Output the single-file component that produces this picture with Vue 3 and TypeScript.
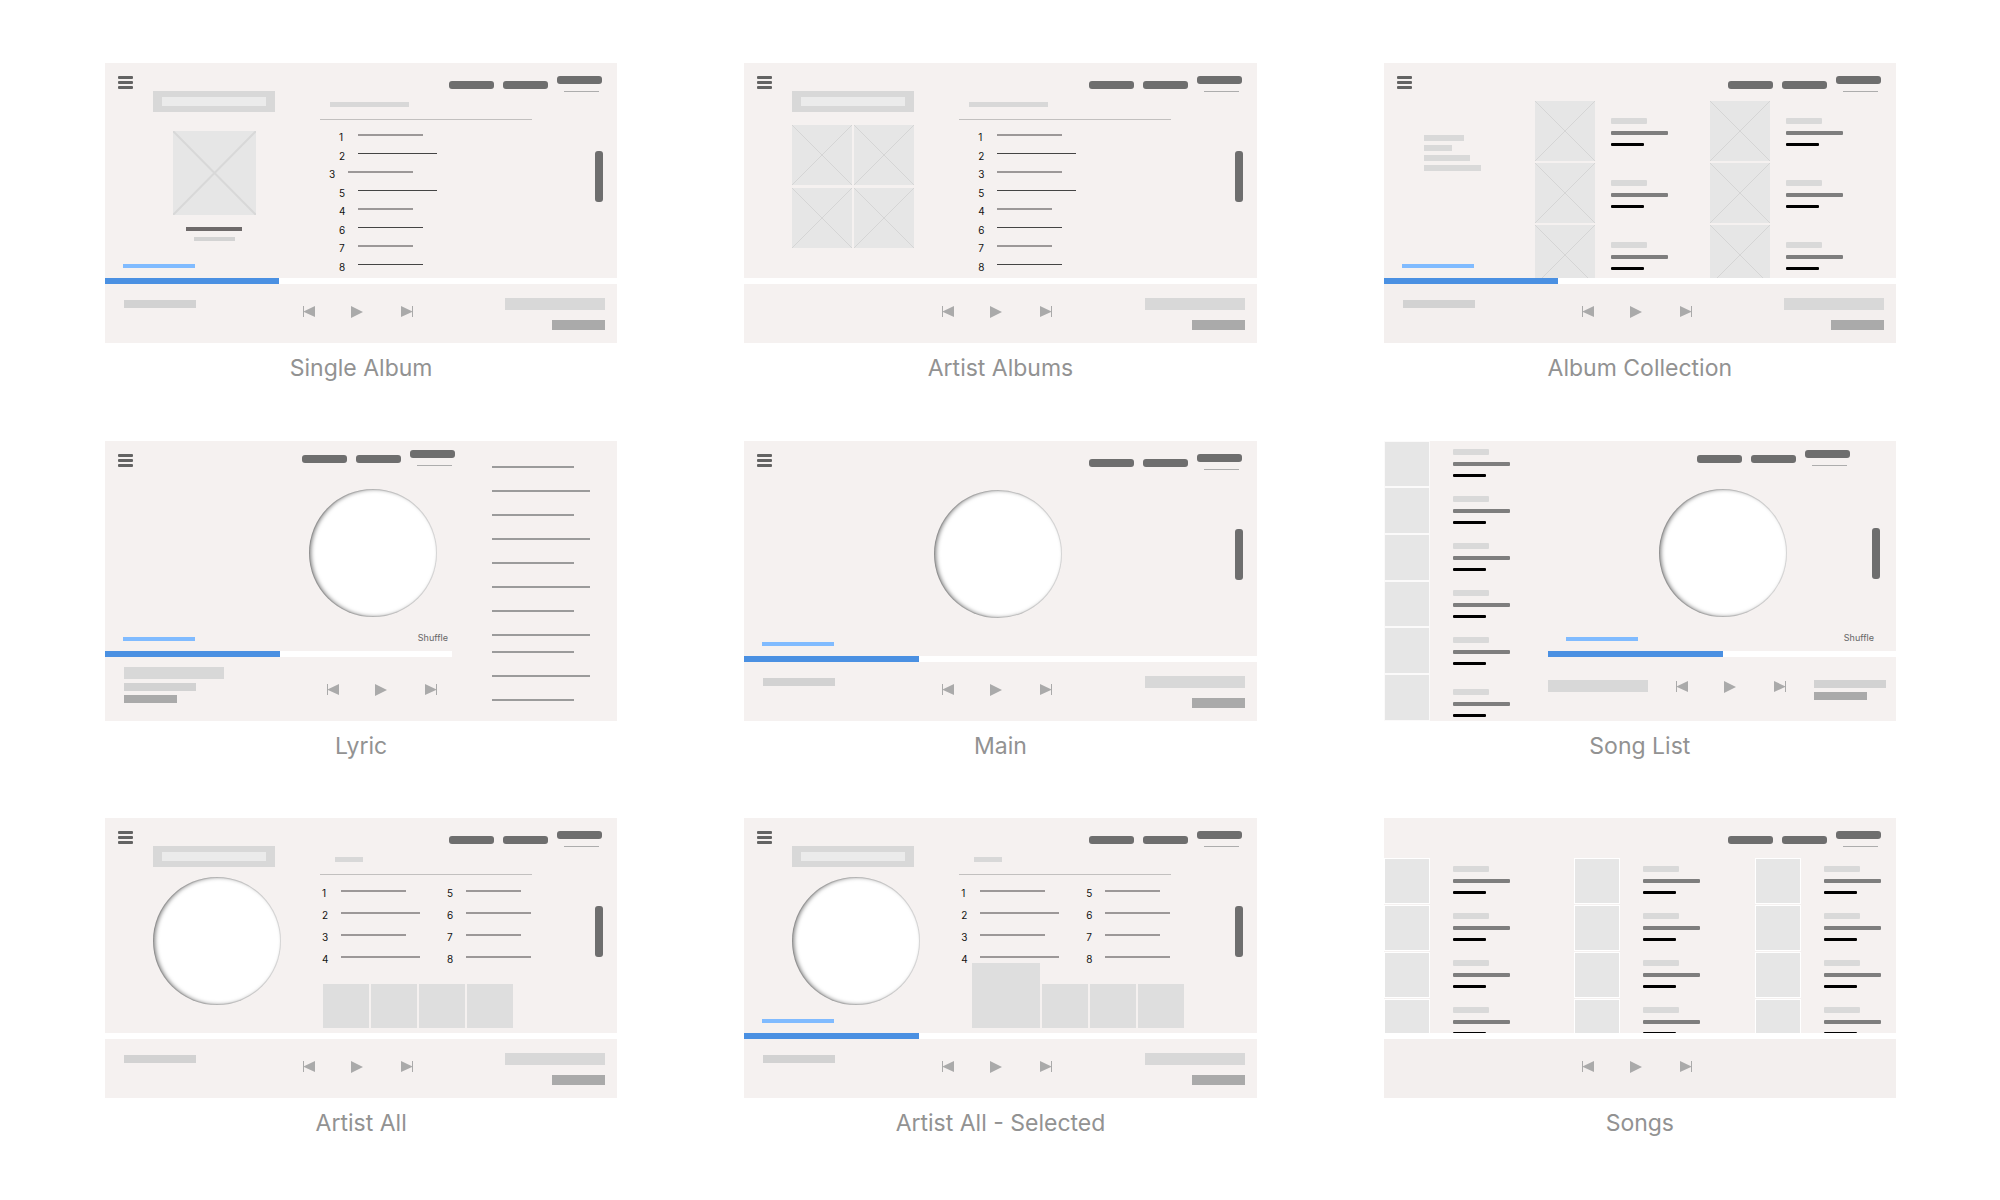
<script setup lang="ts">
type Tone = 'light' | 'mid' | 'dark'
type Layout = 'album' | 'albums' | 'collection' | 'lyric' | 'main' | 'list' | 'artist' | 'songs'

interface Bar {
  width: number
  height: number
  tone: Tone
}

interface Track {
  no: number
  width: number
  thin?: boolean
  outdent?: boolean
}

interface Screen {
  name: string
  layout: Layout
  menu?: boolean
  scroll?: boolean
  selected?: boolean
  playing?: boolean
  left: Bar[]
  right: Bar[]
}

const artistBar: Bar = { width: 72, height: 8, tone: 'mid' }
const titleBar: Bar = { width: 100, height: 12, tone: 'light' }
const timeBar: Bar = { width: 53, height: 10, tone: 'dark' }
const shortTimeBar: Bar = { width: 53, height: 8, tone: 'dark' }

const screens: Screen[] = [
  { name: 'Single Album', layout: 'album', menu: true, scroll: true, playing: true, left: [artistBar], right: [titleBar, timeBar] },
  { name: 'Artist Albums', layout: 'albums', menu: true, scroll: true, left: [], right: [titleBar, timeBar] },
  { name: 'Album Collection', layout: 'collection', menu: true, playing: true, left: [artistBar], right: [titleBar, timeBar] },
  { name: 'Lyric', layout: 'lyric', menu: true, playing: true, left: [titleBar, artistBar, shortTimeBar], right: [] },
  { name: 'Main', layout: 'main', menu: true, scroll: true, playing: true, left: [artistBar], right: [titleBar, timeBar] },
  { name: 'Song List', layout: 'list', scroll: true, playing: true, left: [titleBar], right: [artistBar, shortTimeBar] },
  { name: 'Artist All', layout: 'artist', menu: true, scroll: true, left: [artistBar], right: [titleBar, timeBar] },
  { name: 'Artist All - Selected', layout: 'artist', menu: true, scroll: true, selected: true, playing: true, left: [artistBar], right: [titleBar, timeBar] },
  { name: 'Songs', layout: 'songs', left: [], right: [] },
]

const albumTracks: Track[] = [
  { no: 1, width: 65 },
  { no: 2, width: 79, thin: true },
  { no: 3, width: 65 },
  { no: 5, width: 79, thin: true },
  { no: 4, width: 55 },
  { no: 6, width: 65, thin: true },
  { no: 7, width: 55 },
  { no: 8, width: 65, thin: true },
]

const artistTracks: Track[] = [
  { no: 1, width: 65 },
  { no: 2, width: 79 },
  { no: 3, width: 65 },
  { no: 4, width: 79 },
  { no: 5, width: 55 },
  { no: 6, width: 65 },
  { no: 7, width: 55 },
  { no: 8, width: 65 },
]

const verses: number[][] = [
  [82, 98, 82, 98, 82, 98, 82, 98],
  [82, 98, 82],
]

const filters: number[] = [40, 28, 46, 57]

function tracksFor(layout: Layout): Track[] {
  if (layout === 'artist') return artistTracks
  if (layout === 'album') return albumTracks.map((t) => ({ ...t, outdent: t.no === 3 }))
  return albumTracks
}

function has(screen: Screen, ...layouts: Layout[]): boolean {
  return layouts.includes(screen.layout)
}
</script>

<template>
  <main class="board">
    <figure v-for="screen in screens" :key="screen.name" class="item">
      <div class="screen" :class="screen.layout">
        <template v-if="has(screen, 'list')">
          <div class="rail">
            <div v-for="n in 6" :key="n" class="rail-tile"></div>
          </div>
          <ul class="rail-info">
            <li v-for="n in 6" :key="n" class="info"><i></i><i></i><i></i></li>
          </ul>
        </template>

        <div class="pane">
          <header class="top">
            <button v-if="screen.menu" type="button" class="menu" aria-label="Menu">
              <i></i><i></i><i></i>
            </button>
            <nav class="nav">
              <a href="#" aria-label="First section"><i class="pill"></i></a>
              <a href="#" aria-label="Second section"><i class="pill"></i></a>
              <a href="#" aria-label="Current section" class="current"><i class="pill"></i><i class="underline"></i></a>
            </nav>
          </header>

          <div class="body">
            <aside v-if="has(screen, 'album', 'albums', 'artist')" class="aside">
              <div class="feature">
                <div class="search"><i></i></div>
                <template v-if="has(screen, 'album')">
                  <svg class="cover single" viewBox="0 0 100 100" preserveAspectRatio="none"><path d="M0 0L100 100M100 0L0 100" /></svg>
                  <i class="album-name"></i>
                  <i class="album-artist"></i>
                </template>
                <div v-else-if="has(screen, 'albums')" class="cover-grid">
                  <svg v-for="n in 4" :key="n" class="cover" viewBox="0 0 100 100" preserveAspectRatio="none"><path d="M0 0L100 100M100 0L0 100" /></svg>
                </div>
                <div v-else class="disc"></div>
              </div>
              <i v-if="screen.playing" class="now"></i>
            </aside>

            <section v-if="has(screen, 'album', 'albums', 'artist')" class="content">
              <i class="heading"></i>
              <ol class="tracks">
                <li v-for="track in tracksFor(screen.layout)" :key="track.no" :class="{ outdent: track.outdent }">
                  <span>{{ track.no }}</span>
                  <i :class="{ thin: track.thin }" :style="{ width: track.width + 'px' }"></i>
                </li>
              </ol>
              <div v-if="has(screen, 'artist')" class="tiles" :class="{ selected: screen.selected }">
                <i v-for="n in 4" :key="n"></i>
              </div>
            </section>

            <template v-if="has(screen, 'collection')">
              <aside class="aside">
                <div class="filters">
                  <i v-for="width in filters" :key="width" :style="{ width: width + 'px' }"></i>
                </div>
                <i class="now"></i>
              </aside>
              <ul v-for="c in 2" :key="c" class="column">
                <li v-for="n in 3" :key="n">
                  <svg class="cover" viewBox="0 0 100 100" preserveAspectRatio="none"><path d="M0 0L100 100M100 0L0 100" /></svg>
                  <div class="info"><i></i><i></i><i></i></div>
                </li>
              </ul>
            </template>

            <template v-if="has(screen, 'songs')">
              <ul v-for="c in 3" :key="c" class="column">
                <li v-for="n in 4" :key="n">
                  <div class="song-tile"></div>
                  <div class="info"><i></i><i></i><i></i></div>
                </li>
              </ul>
            </template>

            <div v-if="has(screen, 'lyric', 'main', 'list')" class="disc"></div>
            <i v-if="screen.scroll" class="scroll"></i>
          </div>

          <div v-if="has(screen, 'lyric', 'main', 'list')" class="status">
            <i class="now"></i>
            <span v-if="!has(screen, 'main')">Shuffle</span>
          </div>

          <div class="progress"><i v-if="screen.playing"></i></div>

          <footer class="player">
            <div class="meta">
              <i v-for="(bar, n) in screen.left" :key="n" :class="bar.tone" :style="{ width: bar.width + 'px', height: bar.height + 'px' }"></i>
            </div>
            <div class="transport">
              <button type="button" aria-label="Previous">
                <svg width="12" height="12" viewBox="0 0 12 12"><path d="M0 0h1v5.2L12 0v11L1 6v5H0z" /></svg>
              </button>
              <button type="button" aria-label="Play">
                <svg width="14" height="12" viewBox="0 0 14 12"><path d="M0 0l12 6L0 12z" /></svg>
              </button>
              <button type="button" aria-label="Next">
                <svg width="12" height="12" viewBox="0 0 12 12"><path d="M12 0h-1v5.2L0 0v11l11-5v5h1z" /></svg>
              </button>
            </div>
            <div class="meta end">
              <i v-for="(bar, n) in screen.right" :key="n" :class="bar.tone" :style="{ width: bar.width + 'px', height: bar.height + 'px' }"></i>
            </div>
          </footer>
        </div>

        <div v-if="has(screen, 'lyric')" class="lyrics">
          <div v-for="(verse, v) in verses" :key="v" class="verse">
            <i v-for="(width, n) in verse" :key="n" :style="{ width: width + 'px' }"></i>
          </div>
        </div>
      </div>
      <figcaption>{{ screen.name }}</figcaption>
    </figure>
  </main>
</template>

<style>
body {
  margin: 0;
  background: #fff;
}
</style>

<style scoped>
* {
  box-sizing: border-box;
}
i {
  display: block;
  flex: none;
}
ul,
ol {
  list-style: none;
  margin: 0;
  padding: 0;
}
button {
  border: 0;
  padding: 0;
  background: none;
  cursor: pointer;
}
.board {
  min-height: 100vh;
  padding: 63px 104px 61px 105px;
  display: grid;
  grid-template-columns: repeat(3, 1fr);
  column-gap: 127px;
  align-content: space-between;
  font-family: Inter, "Liberation Sans", sans-serif;
}
.item {
  margin: 0;
}
figcaption {
  margin-top: 9px;
  font-size: 23px;
  line-height: 32px;
  text-align: center;
  color: #929292;
}

.screen {
  height: 280px;
  display: flex;
  overflow: hidden;
  background: #f5f1f0;
}
.pane {
  flex: 1;
  min-width: 0;
  display: flex;
  flex-direction: column;
}

/* top bar */
.top {
  flex: none;
  height: 28px;
  padding: 13px 15px 0 13px;
  display: flex;
  align-items: flex-start;
}
.menu {
  display: grid;
  gap: 2px;
}
.menu i {
  width: 15px;
  height: 3px;
  border-radius: 1px;
  background: #636363;
}
.nav {
  margin-left: auto;
  display: flex;
  gap: 9px;
}
.nav a {
  padding-top: 5px;
}
.nav .current {
  padding-top: 0;
}
.pill {
  width: 45px;
  height: 8px;
  border-radius: 3px;
  background: #6e6e6e;
}
.underline {
  width: 35px;
  height: 1px;
  margin: 7px 3px 0 auto;
  background: #adadad;
}

/* body */
.body {
  flex: 1;
  min-height: 0;
  display: flex;
  align-items: flex-start;
}
.scroll {
  width: 8px;
  height: 51px;
  margin: 60px 14px 0 auto;
  border-radius: 3px;
  background: #6e6e6e;
}
.aside {
  width: 215px;
  height: 100%;
  flex: none;
  display: flex;
  flex-direction: column;
}
.feature {
  width: 122px;
  margin-left: 48px;
  display: flex;
  flex-direction: column;
  align-items: center;
}
.search {
  align-self: stretch;
  padding: 6px 9px;
  background: #d8d8d8;
}
.search i {
  height: 9px;
  background: #ebebeb;
}
.cover {
  display: block;
  width: 60px;
  height: 60px;
  background: #e6e6e6;
}
.cover path {
  stroke: #d5d5d5;
  stroke-width: 1px;
  vector-effect: non-scaling-stroke;
}
.cover.single {
  width: 83px;
  height: 84px;
  margin-top: 19px;
}
.cover.single path {
  stroke: #d8d8d8;
  stroke-width: 2px;
}
.cover-grid {
  margin-top: 13px;
  display: grid;
  grid-template-columns: auto auto;
  gap: 3px 2px;
}
.album-name {
  width: 56px;
  height: 4px;
  margin-top: 12px;
  background: #6e6a6a;
}
.album-artist {
  width: 41px;
  height: 4px;
  margin-top: 6px;
  background: #d3d3d3;
}
.disc {
  flex: none;
  width: 128px;
  height: 128px;
  border-radius: 50%;
  background: #fff;
  box-shadow: inset 2px 0 4px rgba(0, 0, 0, 0.5), inset 0 0 0 1px rgba(0, 0, 0, 0.1);
}
.feature .disc {
  align-self: flex-start;
  margin-top: 10px;
}
.now {
  width: 72px;
  height: 4px;
  margin: auto 0 10px 18px;
  background: #80bbff;
}

/* track lists */
.content {
  width: 212px;
  height: 100%;
  display: flex;
  flex-direction: column;
}
.heading {
  width: 79px;
  height: 5px;
  margin: 11px 0 12px 10px;
  background: #d8d8d8;
}
.artist .heading {
  width: 28px;
  margin-left: 15px;
}
.tracks {
  height: 157px;
  flex: none;
  padding: 8px 0 0 19px;
  border-top: 1px solid #c2c0bf;
  display: grid;
  grid-template-rows: repeat(8, 1fr);
}
.tracks li {
  height: 18px;
  display: flex;
  font-size: 10px;
  line-height: 18px;
  color: #111;
}
.tracks span {
  width: 19px;
}
.tracks i {
  height: 2px;
  margin-top: 6px;
  background: #9c9898;
}
.tracks .thin {
  height: 1px;
  background: #444;
}
.tracks .outdent {
  margin-left: -10px;
}
.artist .tracks {
  height: auto;
  padding: 9px 0 0 2px;
  grid-template-columns: 125px auto;
  grid-template-rows: repeat(4, 22px);
  grid-auto-flow: column;
}
.tiles {
  height: 44px;
  margin: 12px 0 0 3px;
  display: flex;
  align-items: flex-end;
  gap: 2px;
}
.tiles i {
  width: 46px;
  height: 44px;
  background: #dedede;
}
.tiles.selected {
  margin-left: 13px;
}
.selected i:first-child {
  width: 68px;
  height: 65px;
}

/* cover + caption columns */
.info i {
  border-radius: 1px;
}
.info i:nth-child(1) {
  width: 36px;
  height: 6px;
  background: #d9d9d9;
}
.info i:nth-child(2) {
  width: 57px;
  height: 4px;
  margin: 7px 0 8px;
  background: #7e7e7e;
}
.info i:nth-child(3) {
  width: 33px;
  height: 3px;
  background: #000;
}
.column li {
  display: flex;
}
.collection .body,
.songs .body {
  overflow: hidden;
}
.collection .aside {
  width: 151px;
}
.filters {
  margin: 44px 0 0 40px;
  display: grid;
  gap: 4px;
}
.filters i {
  height: 6px;
  background: #d9d9d9;
}
.collection .column {
  width: 175px;
  height: 183px;
  margin-top: 10px;
  display: grid;
  grid-template-rows: repeat(3, 1fr);
  gap: 2px;
}
.collection .column .cover {
  height: 100%;
}
.collection .info {
  margin: 17px 0 0 16px;
}
.songs .column {
  width: 190px;
  margin-top: 12px;
  display: grid;
  gap: 1px;
}
.songs .column:nth-child(2) {
  width: 181px;
}
.songs .column:last-child {
  width: auto;
}
.song-tile {
  width: 46px;
  height: 46px;
  border: 1px solid #fff;
  background: #e6e6e6;
}
.songs .info {
  margin: 8px 0 0 23px;
}

/* song list rail */
.rail {
  width: 46px;
  flex: none;
  padding: 1px;
  display: grid;
  grid-template-rows: repeat(6, 1fr);
  gap: 2px;
  background: #fbfafa;
}
.rail-tile {
  background: #e6e6e6;
}
.rail-info {
  width: 118px;
  flex: none;
  padding: 8px 0 0 23px;
}
.rail-info li {
  height: 47px;
}
.rail-info li:last-child {
  margin-top: 5px;
}

/* status line, progress, player */
.status {
  display: flex;
  align-items: baseline;
  justify-content: space-between;
  padding: 0 7px 8px 18px;
  font-size: 9px;
  line-height: 10px;
  color: #666;
}
.status .now {
  margin: 0;
}
.main .status {
  padding-bottom: 10px;
}
.list .status {
  padding-right: 22px;
}
.progress {
  flex: none;
  height: 6px;
  background: #fff;
}
.progress i {
  width: 34%;
  height: 100%;
  background: #4a90e2;
}
.player {
  flex: none;
  height: 59px;
  padding: 0 12px 0 6px;
  display: grid;
  grid-template-columns: 1fr auto 1fr;
  align-items: start;
}
.collection .player,
.songs .player {
  background: #f3efee;
}
.meta {
  padding: 16px 0 0 13px;
  display: flex;
  flex-direction: column;
  align-items: flex-start;
  gap: 10px;
}
.meta.end {
  padding: 14px 0 0;
  align-items: flex-end;
}
.light {
  background: #d8d8d8;
}
.mid {
  background: #d2d2d2;
}
.dark {
  background: #aaa;
}
.transport {
  padding-top: 22px;
  display: flex;
  gap: 36px;
}
.transport svg {
  display: block;
  fill: #aaa;
}

/* layouts around the disc */
.main .body {
  display: grid;
  grid-template-columns: 1fr auto 1fr;
  padding-right: 5px;
}
.main .disc {
  grid-column: 2;
  margin-top: 21px;
}
.main .scroll {
  margin-right: 9px;
}
.lyric .pane {
  flex: none;
  width: 350px;
}
.lyric .nav,
.list .nav {
  margin-top: -4px;
}
.lyric .top {
  padding-right: 0;
}
.lyric .disc {
  margin: 20px 18px 0 auto;
}
.lyric .progress {
  margin-right: 3px;
}
.lyric .progress i,
.list .progress i {
  width: 175px;
}
.lyric .player,
.list .player {
  height: 64px;
}
.lyric .player {
  padding: 0 18px 0 6px;
  grid-template-columns: 1fr auto auto;
}
.lyric .transport {
  padding-top: 27px;
}
.lyric .meta {
  padding-top: 10px;
  gap: 4px;
}
.lyrics {
  padding: 25px 0 0 37px;
  display: grid;
  align-content: start;
  gap: 15px;
}
.verse {
  display: grid;
  gap: 22px;
}
.verse i {
  height: 2px;
  background: #9b9b9b;
}
.list .top {
  padding-right: 46px;
}
.list .disc {
  margin: 20px 0 0 111px;
}
.list .scroll {
  margin: 59px 16px 0 auto;
}
.list .player {
  padding: 0 10px 0 0;
  grid-template-columns: auto auto auto;
  justify-content: space-between;
}
.list .transport {
  padding-top: 24px;
}
.list .meta {
  padding: 23px 0 0;
  align-items: flex-start;
  gap: 4px;
}
</style>
